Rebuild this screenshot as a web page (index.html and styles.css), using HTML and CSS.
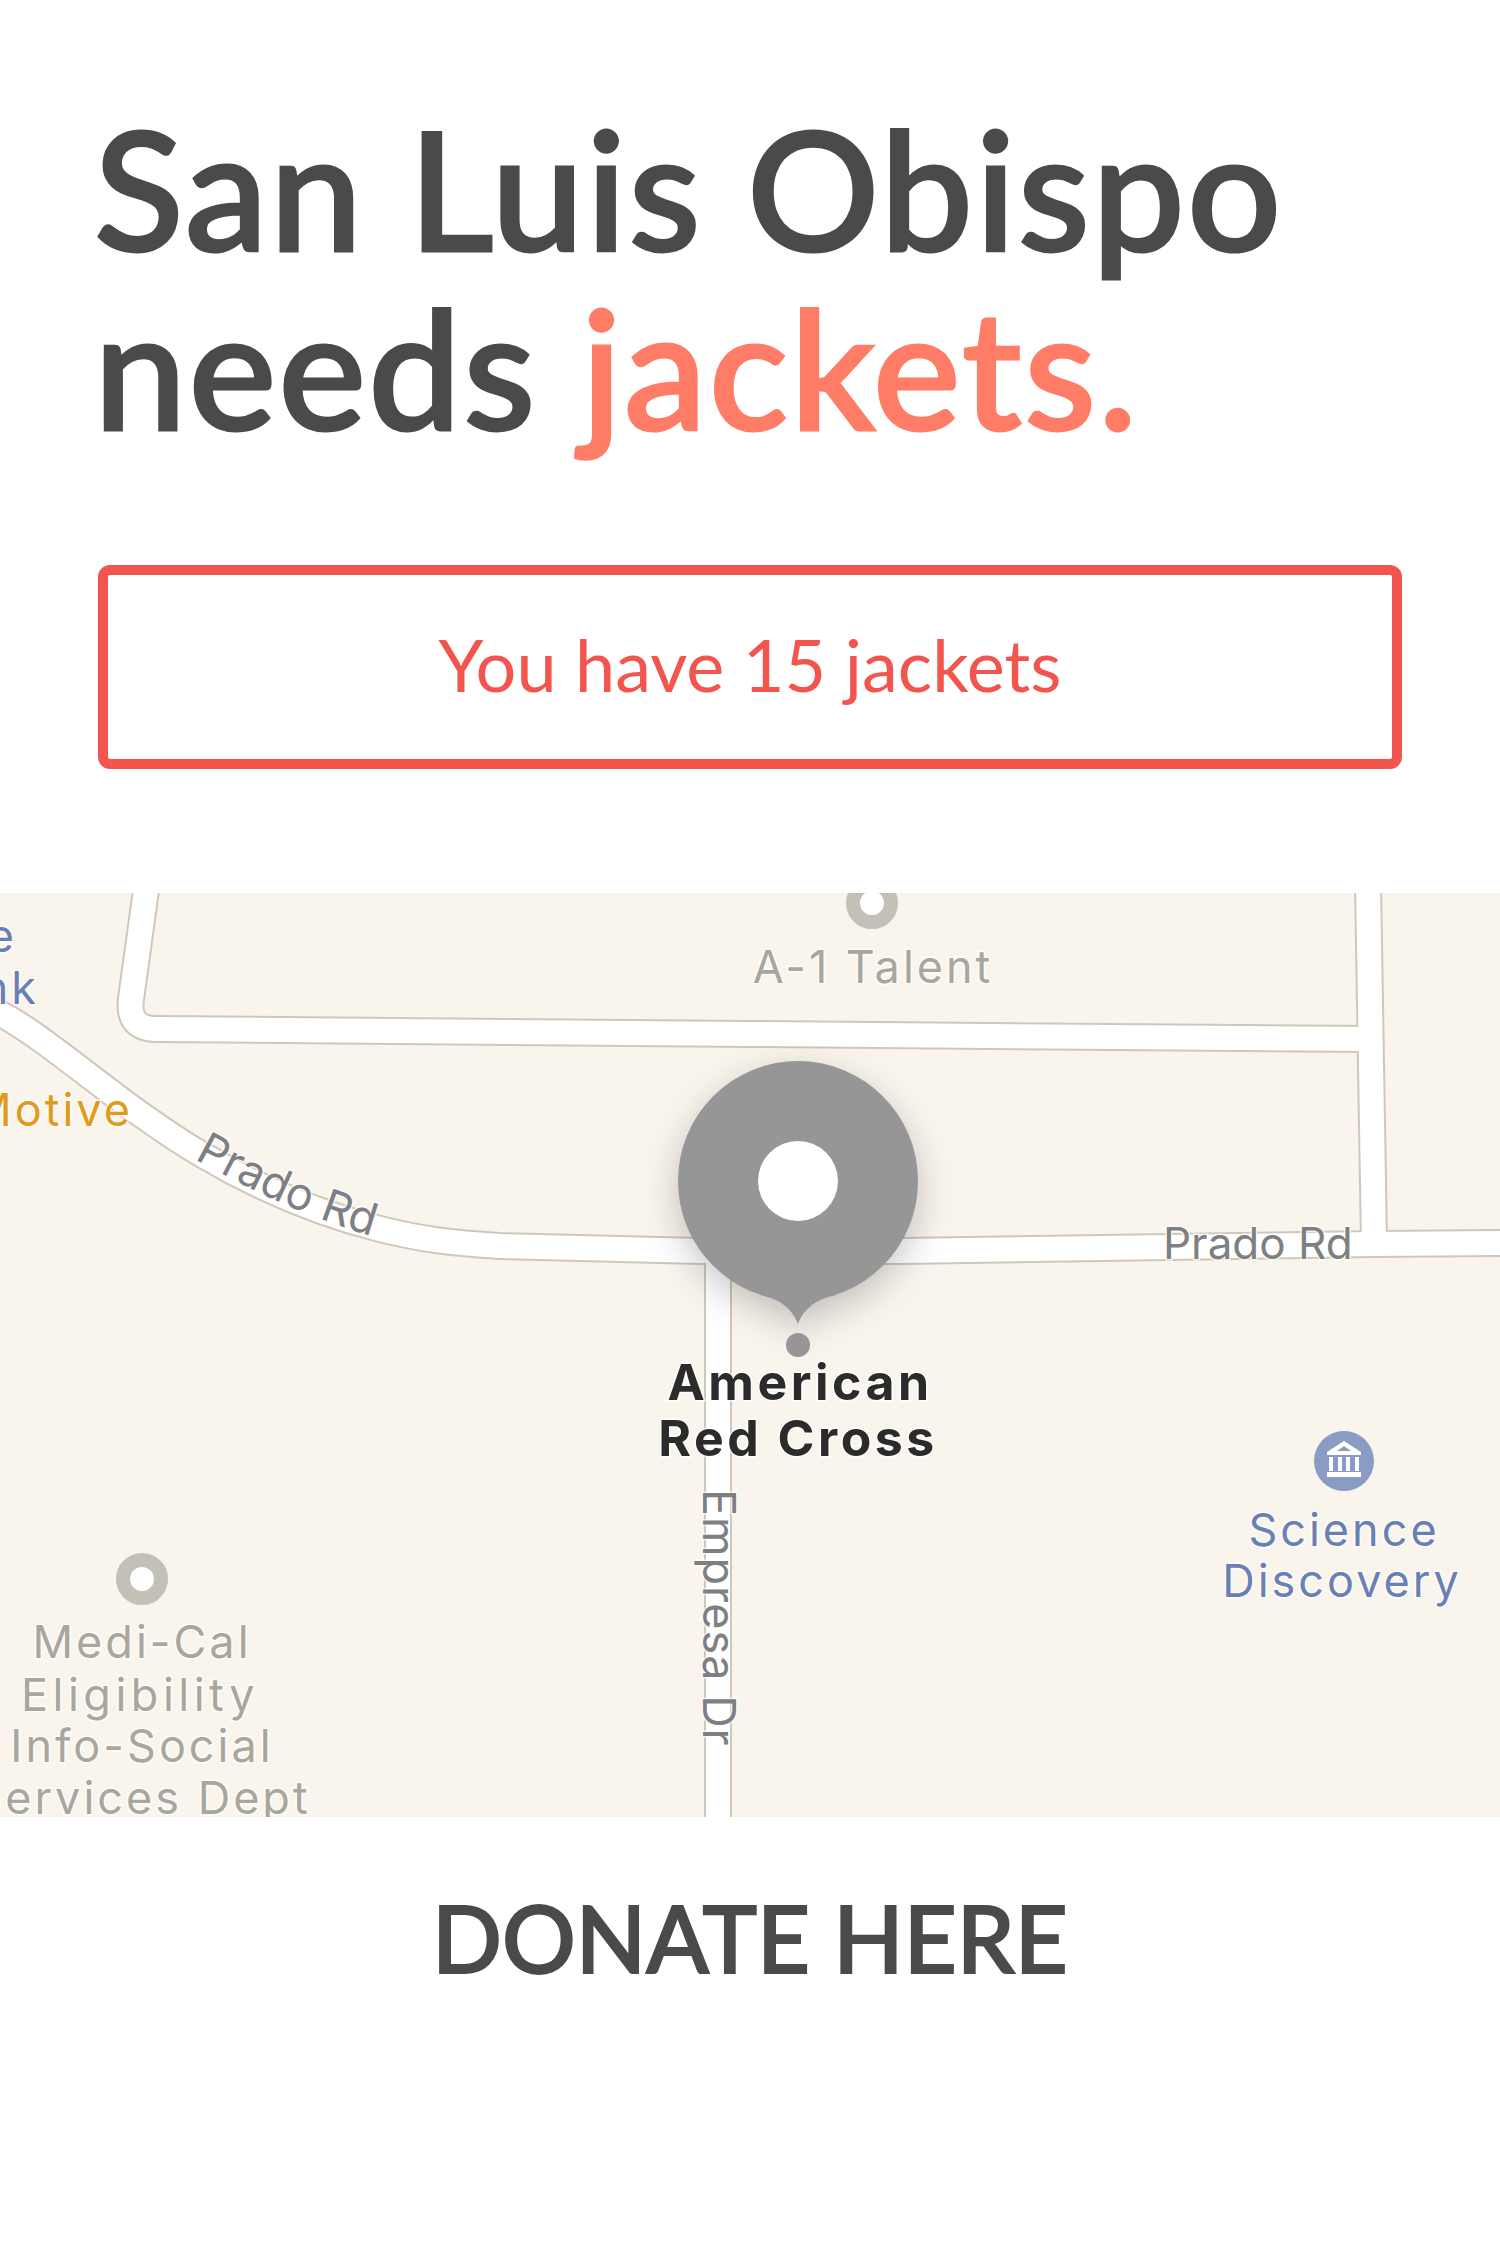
FILE: index.html
```html
<!DOCTYPE html>
<html lang="en">
<head>
<meta charset="utf-8">
<title>San Luis Obispo needs jackets</title>
<link rel="stylesheet" href="styles.css">
</head>
<body>
<main class="page">
  <section class="intro">
    <h1 class="headline">San Luis Obispo<br>needs <span class="accent">jackets.</span></h1>
    <div class="count-box">You have 15 jackets</div>
  </section>
  <svg class="map" viewBox="0 894 1500 924" width="1500" height="924" role="img" aria-label="Map">
    <defs>
      <path id="prado-left" d="M194 1160 C 260 1196 320 1224 390 1242"/>
    </defs>
    <rect class="land" x="0" y="894" width="1500" height="924"/>
    <g class="casing">
      <path d="M147 884 L131 1000 Q127 1030 157 1030 L750 1035 L1368 1040"/>
      <path d="M1368 884 L1374 1245"/>
      <path d="M718 1252 L718 1830"/>
      <path d="M-10 1010 C 20 1022 60 1055 129 1107 C 150 1122 175 1140 201 1155 C 260 1190 320 1215 380 1230 C 420 1240 450 1244 500 1247 L 700 1252 L 900 1252 L 1374 1245 L 1510 1244"/>
    </g>
    <g class="road">
      <path d="M147 884 L131 1000 Q127 1030 157 1030 L750 1035 L1368 1040"/>
      <path d="M1368 884 L1374 1245"/>
      <path d="M718 1252 L718 1830"/>
      <path d="M-10 1010 C 20 1022 60 1055 129 1107 C 150 1122 175 1140 201 1155 C 260 1190 320 1215 380 1230 C 420 1240 450 1244 500 1247 L 700 1252 L 900 1252 L 1374 1245 L 1510 1244"/>
    </g>

    <circle class="poi-ring" cx="872" cy="904" r="19"/>
    <text class="label poi" x="873" y="984">A-1 Talent</text>

    <text class="label blue end" x="17" y="953">e</text>
    <text class="label blue end" x="39" y="1005">nk</text>
    <text class="label orange end" x="133" y="1127">Motive</text>

    <text class="label street start"><textPath href="#prado-left">Prado Rd</textPath></text>
    <text class="label street narrow start" x="1163" y="1260">Prado Rd</text>
    <text class="label street start vertical" transform="translate(703 1490) rotate(90)">Empresa Dr</text>

    <circle class="poi-ring" cx="142" cy="1580" r="19"/>
    <text class="label poi" x="142" y="1659">Medi-Cal</text>
    <text class="label poi wide" x="140" y="1712">Eligibility</text>
    <text class="label poi" x="142" y="1763">Info-Social</text>
    <text class="label poi" x="142" y="1815">Services Dept</text>

    <circle class="museum" cx="1344" cy="1462" r="30"/>
    <path class="museum-icon" fill-rule="evenodd" d="M1344 1442 L1361 1453 L1361 1456 L1327 1456 L1327 1453 Z M1344 1447 L1337 1452 L1351 1452 Z M1329 1458 H1333 V1472 H1329 Z M1338 1458 H1342 V1472 H1338 Z M1346 1458 H1350 V1472 H1346 Z M1355 1458 H1359 V1472 H1355 Z M1327 1473 H1361 V1478 H1327 Z"/>
    <text class="label blue" x="1344" y="1547">Science</text>
    <text class="label blue" x="1342" y="1598">Discovery</text>

    <g class="pin">
      <circle cx="798" cy="1182" r="120"/>
      <path d="M760 1296 C 782 1300 793 1312 798 1325 C 803 1312 814 1300 836 1296 Z"/>
    </g>
    <circle class="pin-hole" cx="798" cy="1182" r="40"/>
    <circle class="pin-dot" cx="798" cy="1346" r="12"/>
    <text class="label place" x="800" y="1401">American</text>
    <text class="label place" x="798" y="1457">Red Cross</text>
  </svg>
  <a class="donate" href="#">DONATE HERE</a>
</main>
</body>
</html>
```

FILE: styles.css
```css
* { box-sizing: border-box; }
html, body { margin: 0; padding: 0; background: #fff; }
.page {
  display: flex;
  flex-direction: column;
  width: 1500px;
  height: 2254px;
  overflow: hidden;
  font-family: Lato, "Open Sans", sans-serif;
}
.intro { display: flex; flex-direction: column; padding: 98px 98px 0; }
.headline {
  margin: 0 0 0 -4px;
  font-size: 165px;
  line-height: 179px;
  letter-spacing: 2.4px;
  font-weight: 500;
  color: #4a4a4a;
  white-space: nowrap;
  -webkit-text-stroke: 3px #4a4a4a;
}
.accent { color: #ff7c66; -webkit-text-stroke-color: #ff7c66; }
.count-box {
  display: flex;
  align-items: center;
  justify-content: center;
  height: 204px;
  margin-top: 109px;
  padding-bottom: 6px;
  border: 10px solid #f2554d;
  border-radius: 12px;
  font-size: 72px;
  font-weight: 400;
  color: #f2554d;
}
.map { display: block; margin-top: 124px; flex: none; }
.land { fill: #f9f5ed; }
.casing path, .road path { fill: none; stroke-linejoin: round; }
.casing path { stroke: #d0c7ba; stroke-width: 28px; }
.road path { stroke: #fff; stroke-width: 24px; }
.label {
  font-family: Inter, Roboto, sans-serif;
  font-size: 45px;
  letter-spacing: 3px;
  text-anchor: middle;
  paint-order: stroke;
  stroke: rgba(255, 255, 255, .75);
  stroke-width: 3px;
}
.end { text-anchor: end; }
.start { text-anchor: start; }
.poi { fill: #a9a69e; }
.wide { letter-spacing: 4.5px; }
.blue { fill: #6a80b3; }
.orange { fill: #e09a1c; }
.street { fill: #7d7f82; letter-spacing: 0; }
.narrow { font-size: 44px; }
.vertical { letter-spacing: 1px; }
.place { fill: #2b2b2b; font-weight: 700; font-size: 50px; letter-spacing: 3.5px; }
.poi-ring { fill: #fff; stroke: #c3c0b8; stroke-width: 14px; }
.museum { fill: #8b9cc4; }
.museum-icon { fill: #fff; }
.pin { fill: #969696; filter: drop-shadow(0 12px 18px rgba(0, 0, 0, .22)); }
.pin-hole { fill: #fff; }
.pin-dot { fill: #969696; }
.donate {
  align-self: center;
  margin-top: 66px;
  font-size: 92px;
  line-height: 110px;
  font-weight: 500;
  color: #4a4a4a;
  text-decoration: none;
  -webkit-text-stroke: 2px #4a4a4a;
}
```
